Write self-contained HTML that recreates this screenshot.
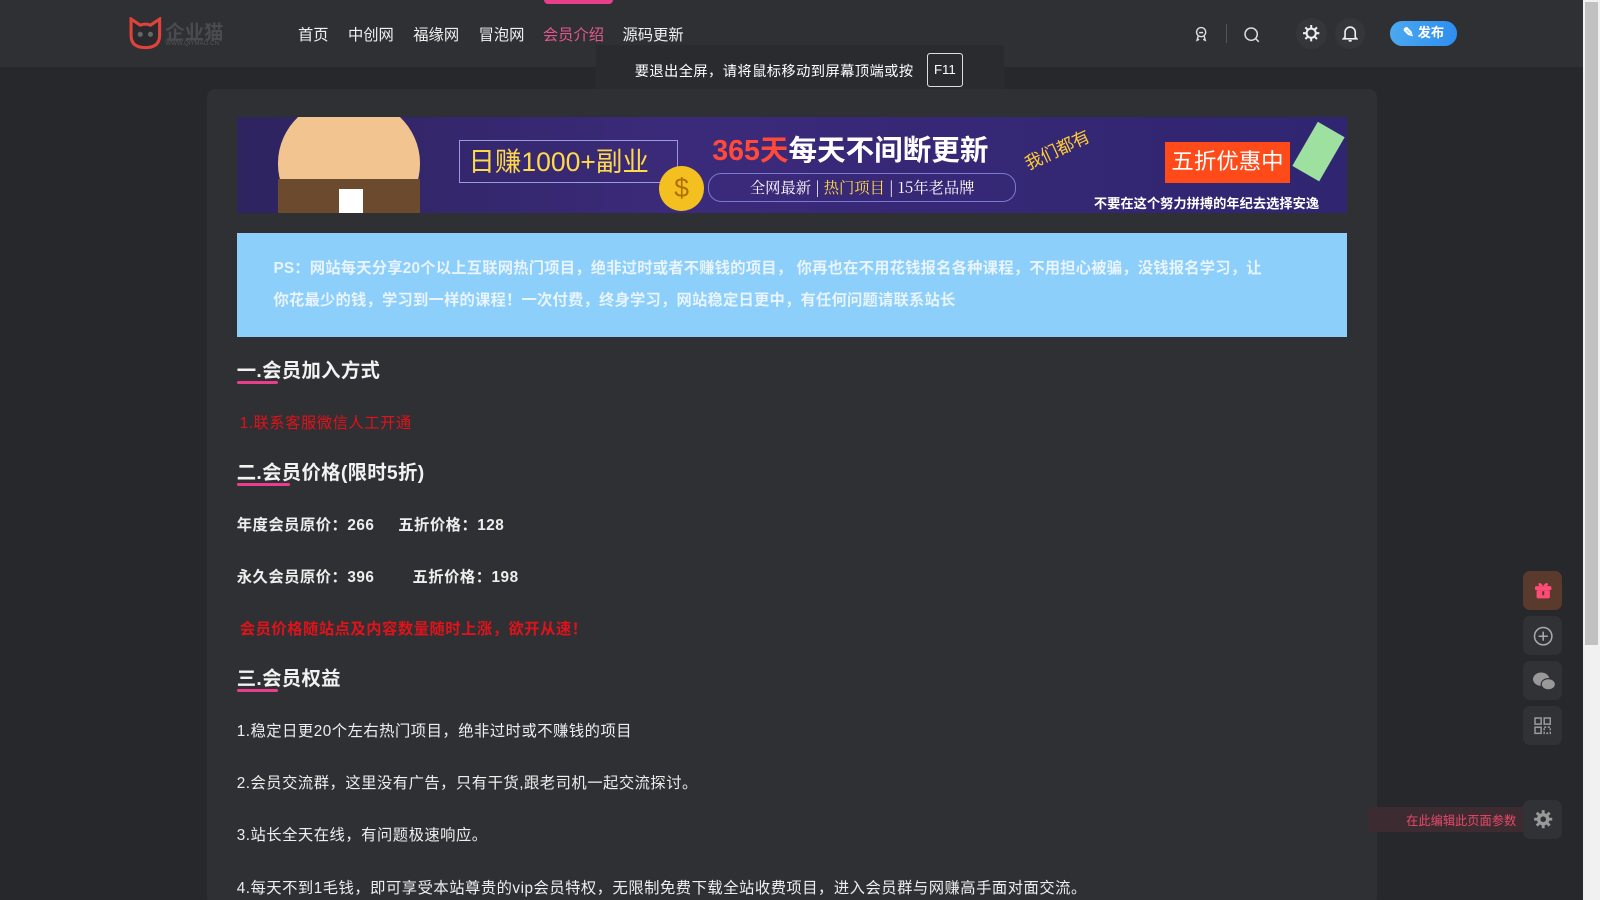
<!DOCTYPE html>
<html><head><meta charset="utf-8">
<style>
html,body{margin:0;padding:0;overflow:hidden}
body{width:1568px;height:882px;zoom:1.0204;background:#27282c;font-family:"Liberation Sans","Noto Sans CJK SC",sans-serif;position:relative;color:#e6e6e6}
.hdr{position:absolute;left:0;top:0;width:1551px;height:66px;background:#2f3034}
.nav a{position:absolute;top:23px;font-size:15px;color:#f0f0f0;text-decoration:none}
.card{position:absolute;left:203px;top:87px;width:1146px;height:800px;background:#2f3033;border-radius:8px}
.ab{position:absolute}
h2{margin:0;font-size:19px;font-weight:bold;color:#f2f2f2;position:absolute;left:232px;letter-spacing:0.3px}
.ul{position:absolute;left:232px;height:3px;background:#e83e8c;border-radius:2px}
p{margin:0;position:absolute;left:232px;font-size:15px;color:#eee;letter-spacing:0.5px;white-space:nowrap}
.side{position:absolute;left:1493px;width:38px;height:38px;border-radius:7px;background:#313236}
</style></head><body>
<div class="hdr"></div>
<div class="ab" style="left:533px;top:0;width:68px;height:4px;background:#e83e8c;border-radius:0 0 4px 4px"></div>
<svg class="ab" style="left:125px;top:17px" width="34" height="32" viewBox="0 0 34 32"><path d="M3 2 L12 8 Q17 6 22 8 L31 2 L31 18 Q31 30 17 30 Q3 30 3 18Z" fill="#2a2a2e" stroke="#e0433a" stroke-width="3"/><circle cx="12" cy="17" r="2.5" fill="#666"/><circle cx="22" cy="17" r="2.5" fill="#666"/></svg>
<div class="ab" style="left:162px;top:17px;font-size:19px;font-weight:bold;color:#4a4b50">企业猫</div>
<div class="ab" style="left:162px;top:39px;font-size:6px;color:#555">WWW.QIYMAO.CN</div>
<div class="nav">
<a style="left:292px">首页</a><a style="left:341px">中创网</a><a style="left:405px">福缘网</a><a style="left:469px">冒泡网</a><a style="left:532px;color:#e0588f">会员介绍</a><a style="left:610px">源码更新</a>
</div>
<div class="ab" style="left:584px;top:44px;width:400px;height:48px;background:#2a2b2f"></div>
<div class="ab" style="left:622px;top:59px;font-size:14px;color:#fff;letter-spacing:0.4px">要退出全屏，请将鼠标移动到屏幕顶端或按</div>
<div class="ab" style="left:908px;top:52px;width:36px;height:33px;border:1px solid #ddd;border-radius:3px;box-sizing:border-box;font-size:13px;color:#fff;text-align:center;line-height:31px">F11</div>
<svg class="ab" style="left:1169px;top:25px" width="16" height="16" viewBox="0 0 16 16" fill="none" stroke="#ddd" stroke-width="1.4"><circle cx="8" cy="6" r="4.5"/><path d="M5 10l-1 4 2-1M11 10l1 4-2-1M6 6.5h4"/></svg>
<div class="ab" style="left:1201px;top:24px;width:1px;height:18px;background:#555"></div>
<svg class="ab" style="left:1218px;top:25px" width="17" height="17" viewBox="0 0 17 17" fill="none" stroke="#ddd" stroke-width="1.5"><circle cx="8" cy="8" r="6"/><path d="M12.5 12.5l3 3"/></svg>
<div class="ab" style="left:1270px;top:18px;width:30px;height:30px;border-radius:50%;background:#35363a"></div>
<svg class="ab" style="left:1276px;top:24px" width="18" height="18" viewBox="0 0 18 18" fill="none" stroke="#eee" stroke-width="2"><circle cx="9" cy="9" r="4.5"/><path d="M9 1v3M9 14v3M1 9h3M14 9h3M3.3 3.3l2 2M12.7 12.7l2 2M3.3 14.7l2-2M12.7 5.3l2-2"/></svg>
<div class="ab" style="left:1308px;top:18px;width:30px;height:30px;border-radius:50%;background:#35363a"></div>
<svg class="ab" style="left:1315px;top:24px" width="16" height="18" viewBox="0 0 16 18" fill="none" stroke="#eee" stroke-width="1.6"><path d="M3 13V8a5 5 0 0110 0v5l1.5 1.5h-13z"/><path d="M6.5 16.5h3"/></svg>
<div class="ab" style="left:1362px;top:21px;width:66px;height:24px;border-radius:12px;background:linear-gradient(90deg,#4ba8f0,#2e8ef0);color:#fff;font-size:13px;font-weight:bold;line-height:24px;text-align:center">✎ 发布</div>

<div class="card"></div>
<div class="ab" style="left:232px;top:115px;width:1088px;height:94px;background:linear-gradient(90deg,#2e2460,#3b2a7a 40%,#2f2570);overflow:hidden">
 <div class="ab" style="left:40px;top:-20px;width:140px;height:130px;border-radius:50%;background:#f2c48f"></div>
 <div class="ab" style="left:40px;top:60px;width:140px;height:50px;background:#6b4a2e"></div>
 <div class="ab" style="left:100px;top:70px;width:24px;height:30px;background:#fff"></div>
 <div class="ab" style="left:218px;top:22px;width:214px;height:42px;border:1px solid #9a9ae0;font-size:26px;color:#ffd94a;line-height:42px;padding-left:8px;box-sizing:border-box">日赚1000+副业</div>
 <div class="ab" style="left:414px;top:48px;width:44px;height:44px;border-radius:50%;background:#f4c020;color:#b07000;font-size:26px;text-align:center;line-height:44px">$</div>
 <div class="ab" style="left:466px;top:10px;font-size:28px;font-weight:bold;color:#fff;white-space:nowrap"><span style="color:#ff4a3a">365天</span>每天不间断更新</div>
 <div class="ab" style="left:462px;top:55px;width:300px;height:26px;border:1px solid #7a7ad0;border-radius:13px;font-size:15px;color:#fff;line-height:26px;text-align:center;white-space:nowrap;font-family:'Noto Serif CJK SC',serif">全网最新 | <span style="color:#ffd94a">热门项目</span> | 15年老品牌</div>
 <div class="ab" style="left:770px;top:18px;font-size:17px;color:#ffcc33;transform:rotate(-25deg);white-space:nowrap">我们都有</div>
 <div class="ab" style="left:910px;top:24px;width:122px;height:40px;background:#ff4a1a;color:#fff;font-size:22px;line-height:40px;text-align:center">五折优惠中</div>
 <div class="ab" style="left:1045px;top:8px;width:30px;height:50px;background:#9ee0a0;transform:rotate(30deg)"></div>
 <div class="ab" style="left:840px;top:74px;font-size:13px;font-weight:bold;color:#fff;white-space:nowrap">不要在这个努力拼搏的年纪去选择安逸</div>
</div>
<div class="ab" style="left:232px;top:228px;width:1088px;height:102px;background:#8dcffb"></div>
<div class="ab" style="left:268px;top:248px;width:1010px;font-size:15px;line-height:31px;color:#e8f4ff;font-weight:bold;letter-spacing:0.2px">PS：网站每天分享20个以上互联网热门项目，绝非过时或者不赚钱的项目， 你再也在不用花钱报名各种课程，不用担心被骗，没钱报名学习，让<br>你花最少的钱，学习到一样的课程！一次付费，终身学习，网站稳定日更中，有任何问题请联系站长</div>

<h2 style="top:348px">一.会员加入方式</h2><div class="ul" style="top:373px;width:40px"></div>
<p style="top:403px;left:235px;color:#e0121a">1.联系客服微信人工开通</p>
<h2 style="top:448px">二.会员价格(限时5折)</h2><div class="ul" style="top:473px;width:52px"></div>
<p style="top:503px;font-weight:bold">年度会员原价：266&nbsp;&nbsp;&nbsp;&nbsp;&nbsp;五折价格：128</p>
<p style="top:554px;font-weight:bold">永久会员原价：396&nbsp;&nbsp;&nbsp;&nbsp;&nbsp;&nbsp;&nbsp;&nbsp;五折价格：198</p>
<p style="top:605px;left:235px;color:#e0121a;font-weight:bold">会员价格随站点及内容数量随时上涨，欲开从速！</p>
<h2 style="top:650px">三.会员权益</h2><div class="ul" style="top:675px;width:40px"></div>
<p style="top:705px">1.稳定日更20个左右热门项目，绝非过时或不赚钱的项目</p>
<p style="top:756px">2.会员交流群，这里没有广告，只有干货,跟老司机一起交流探讨。</p>
<p style="top:807px">3.站长全天在线，有问题极速响应。</p>
<p style="top:858px">4.每天不到1毛钱，即可享受本站尊贵的vip会员特权，无限制免费下载全站收费项目，进入会员群与网赚高手面对面交流。</p>

<div class="side" style="top:560px;background:#5a3a2c"></div>
<svg class="ab" style="left:1502px;top:568px" width="20" height="20" viewBox="0 0 20 20" fill="#ff4b78"><rect x="2" y="6" width="16" height="4" rx="1"/><rect x="3.5" y="10" width="13" height="8" rx="1.5"/><path d="M10 6 C7 1 4 3 6 6Z M10 6 C13 1 16 3 14 6Z"/><rect x="9" y="11" width="2" height="4" fill="#5a3a2c"/></svg>
<div class="side" style="top:604px"></div>
<svg class="ab" style="left:1502px;top:613px" width="20" height="20" viewBox="0 0 20 20" fill="none" stroke="#aaa" stroke-width="1.5"><circle cx="10" cy="10" r="8.5"/><path d="M10 5.5v9M5.5 10h9"/></svg>
<div class="side" style="top:648px"></div>
<svg class="ab" style="left:1501px;top:658px" width="24" height="20" viewBox="0 0 24 20" fill="#999"><ellipse cx="9" cy="8" rx="8" ry="6.5"/><ellipse cx="16" cy="13" rx="7" ry="5.5" stroke="#313236" stroke-width="1.2"/></svg>
<div class="side" style="top:692px"></div>
<svg class="ab" style="left:1503px;top:703px" width="17" height="17" viewBox="0 0 17 17" fill="none" stroke="#999" stroke-width="1.5"><rect x="1" y="1" width="6" height="6"/><rect x="10" y="1" width="6" height="6"/><rect x="1" y="10" width="6" height="6"/><path d="M10 10h6v6h-6z" stroke-dasharray="2 1.5"/></svg>
<div class="ab" style="left:1341px;top:791px;width:160px;height:24px;background:#3c2b31"></div>
<div class="ab" style="left:1378px;top:795px;font-size:12px;color:#e84a6a">在此编辑此页面参数</div>
<div class="side" style="top:784px"></div>
<svg class="ab" style="left:1502px;top:793px" width="20" height="20" viewBox="0 0 18 18" fill="none" stroke="#999" stroke-width="3"><circle cx="9" cy="9" r="4"/><path d="M9 1v3M9 14v3M1 9h3M14 9h3M3.3 3.3l2 2M12.7 12.7l2 2M3.3 14.7l2-2M12.7 5.3l2-2" stroke-width="2.5"/></svg>
<div class="ab" style="left:1551px;top:0;width:17px;height:882px;background:#f1f1f1"></div>
<div class="ab" style="left:1553px;top:2px;width:13px;height:630px;background:#c1c1c1"></div>
</body></html>
